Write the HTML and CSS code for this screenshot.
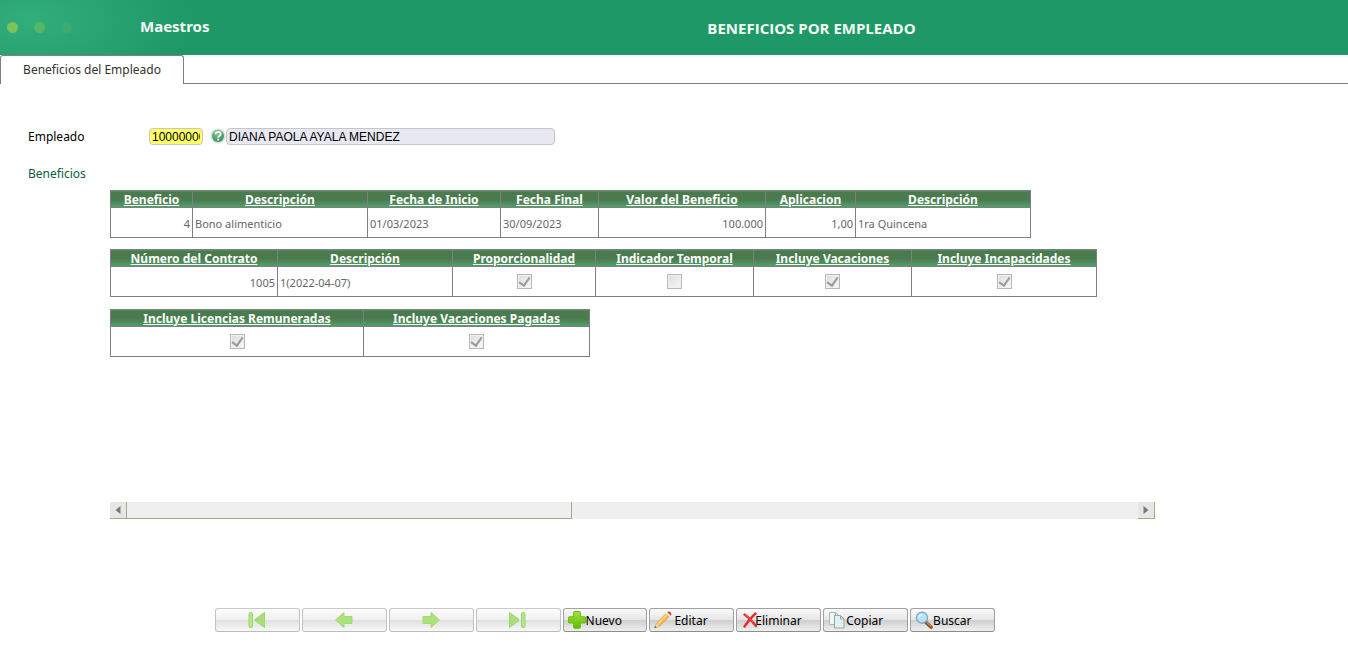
FILE: index.html
```html
<!DOCTYPE html>
<html lang="es">
<head>
<meta charset="utf-8">
<title>Beneficios por Empleado</title>
<link rel="stylesheet" href="styles.css">
</head>
<body>
<header class="banner">
  <div class="brand">
    <div class="dots"><span class="dot"></span><span class="dot dot-mid"></span><span class="dot dot-faint"></span></div>
    <span class="module">Maestros</span>
  </div>
  <h1 class="title">BENEFICIOS POR EMPLEADO</h1>
</header>
<nav class="tabs"><button class="tab" type="button">Beneficios del Empleado</button></nav>
<main>
  <div class="field-row">
    <label class="label" for="emp">Empleado</label>
    <input class="code" id="emp" type="text" value="1000000001">
    <button class="help" type="button" aria-label="Ayuda">
      <svg width="16" height="16" viewBox="0 0 16 16"><defs><radialGradient id="hg" cx=".4" cy=".3" r=".8"><stop offset="0" stop-color="#7fc495"/><stop offset="1" stop-color="#2f8a50"/></radialGradient></defs><circle cx="8" cy="8" r="7.6" fill="#d3e3d8"/><circle cx="8" cy="8" r="6" fill="url(#hg)"/><path d="M5.500 6.300c0-3.300 5.200-3 5.200-.2C10.700 8 8.300 7.900 8.200 9.500M8.200 10.800v1.800" fill="none" stroke="#fff" stroke-width="1.900"/></svg>
    </button>
    <input class="name" type="text" value="DIANA PAOLA AYALA MENDEZ" aria-label="Nombre del empleado" readonly>
  </div>
  <h2 class="section">Beneficios</h2>
  <section class="records">
    <div class="tables">
      <table class="grid grid-main">
        <colgroup><col class="w82"><col class="w175"><col class="w133"><col class="w98"><col class="w167"><col class="w90"><col class="w175"></colgroup>
        <thead><tr><th><a href="#">Beneficio</a></th><th><a href="#">Descripción</a></th><th><a href="#">Fecha de Inicio</a></th><th><a href="#">Fecha Final</a></th><th><a href="#">Valor del Beneficio</a></th><th><a href="#">Aplicacion</a></th><th><a href="#">Descripción</a></th></tr></thead>
        <tbody><tr><td class="num">4</td><td>Bono alimenticio</td><td>01/03/2023</td><td>30/09/2023</td><td class="num">100.000</td><td class="num">1,00</td><td>1ra Quincena</td></tr></tbody>
      </table>
      <table class="grid grid-contract">
        <colgroup><col class="w167"><col class="w175"><col class="w143"><col class="w158"><col class="w158"><col class="w185"></colgroup>
        <thead><tr><th><a href="#">Número del Contrato</a></th><th><a href="#">Descripción</a></th><th><a href="#">Proporcionalidad</a></th><th><a href="#">Indicador Temporal</a></th><th><a href="#">Incluye Vacaciones</a></th><th><a href="#">Incluye Incapacidades</a></th></tr></thead>
        <tbody><tr><td class="num">1005</td><td>1(2022-04-07)</td><td class="tick"><input type="checkbox" aria-label="Proporcionalidad" checked disabled></td><td class="tick"><input type="checkbox" aria-label="Indicador Temporal" disabled></td><td class="tick"><input type="checkbox" aria-label="Incluye Vacaciones" checked disabled></td><td class="tick"><input type="checkbox" aria-label="Incluye Incapacidades" checked disabled></td></tr></tbody>
      </table>
      <table class="grid grid-leave">
        <colgroup><col class="w253"><col class="w226"></colgroup>
        <thead><tr><th><a href="#">Incluye Licencias Remuneradas</a></th><th><a href="#">Incluye Vacaciones Pagadas</a></th></tr></thead>
        <tbody><tr><td class="tick"><input type="checkbox" aria-label="Incluye Licencias Remuneradas" checked disabled></td><td class="tick"><input type="checkbox" aria-label="Incluye Vacaciones Pagadas" checked disabled></td></tr></tbody>
      </table>
    </div>
    <div class="scrollbar">
      <button class="arrow" type="button" aria-label="Izquierda"><svg width="6" height="8" viewBox="0 0 6 8"><path d="M5.500 0v8L.5 4z" fill="#777"/></svg></button>
      <div class="track"><div class="thumb"></div></div>
      <button class="arrow" type="button" aria-label="Derecha"><svg width="6" height="8" viewBox="0 0 6 8"><path d="M.5 0v8l5-4z" fill="#777"/></svg></button>
    </div>
  </section>
</main>
<footer class="toolbar">
  <button class="btn" type="button" aria-label="Primero" disabled><svg width="20" height="18" viewBox="0 0 20 18"><rect x="2" y="1.500" width="3.500" height="15" rx="1.500" fill="#b4e68a" stroke="#98d86a"/><path d="M17.500 1.500v15L8 9.500V8.500z" fill="#a9de78" stroke="#9ad86d"/></svg></button>
  <button class="btn" type="button" aria-label="Anterior" disabled><svg width="20" height="18" viewBox="0 0 20 18"><path d="M10 1.500 1.500 9l8.500 7.500v-4h8v-7h-8z" fill="#ade27a" stroke="#a2da78"/></svg></button>
  <button class="btn" type="button" aria-label="Siguiente" disabled><svg width="20" height="18" viewBox="0 0 20 18"><path d="M10 1.500 18.500 9 10 16.500v-4H2v-7h8z" fill="#ade27a" stroke="#a2da78"/></svg></button>
  <button class="btn" type="button" aria-label="Último" disabled><svg width="20" height="18" viewBox="0 0 20 18"><rect x="13.500" y="1.500" width="3.500" height="15" rx="1.500" fill="#b4e68a" stroke="#98d86a"/><path d="M1.500 1.500v15l9.500-7V8.500z" fill="#a9de78" stroke="#9ad86d"/></svg></button>
  <button class="btn btn-text" type="button"><svg width="18" height="18" viewBox="0 0 18 18"><defs><linearGradient id="pg" x2="0" y2="1"><stop stop-color="#a0e044"/><stop offset="1" stop-color="#64b900"/></linearGradient></defs><path d="M6.500.5h5q.8 0 .8.800v4.500h4.400q.8 0 .8.800v4.600q0 .8-.8.800h-4.400v4.500q0 .8-.8.800h-5q-.8 0-.8-.8V12H1.300q-.8 0-.8-.8V6.600q0-.8.8-.8h4.400V1.300q0-.8.8-.8z" fill="url(#pg)" stroke="#67bd08"/></svg><span>Nuevo</span></button>
  <button class="btn btn-text btn-wide" type="button"><svg width="18" height="18" viewBox="0 0 18 18"><path d="m.5 17 2-5L12 2.500l3.300 3.200-9.500 9.500z" fill="#f6b64b" stroke="#d79436" stroke-width=".5"/><path d="M3.500 12.200 12.600 3l1.100 1.100-9 9.200z" fill="#ffd987"/><path d="m.5 17 1.900-4.800 3.200 3z" fill="#edd1a5"/><path d="m.5 17 .8-2 1.300 1.200z" fill="#444"/><path d="m12 2.500 1.400-1.300 3.300 3.200-1.400 1.300z" fill="#e8e8e8"/><path d="M13.400 1.200C15-.8 19 2.800 16.700 4.400z" fill="#d4383c"/></svg><span>Editar</span></button>
  <button class="btn btn-text btn-tight" type="button"><svg width="14" height="16" viewBox="0 0 14 16"><path d="M1.500 2.500C6 5.500 9 9 13 14M12.500 1.500C8 5.500 5 9 1.500 14.500" fill="none" stroke="#e0302f" stroke-width="2.400" stroke-linecap="round"/><path d="M2 2.600c3.500 2.400 6 5 8 7.400" fill="none" stroke="#fa6a66" stroke-width=".8"/></svg><span>Eliminar</span></button>
  <button class="btn btn-text" type="button"><svg width="18" height="18" viewBox="0 0 18 18"><path d="M1.500 1.500h6l3 3v9h-9z" fill="#eef7f6" stroke="#a3bab8"/><path d="M7.500 1.500v3h3" fill="none" stroke="#a3bab8"/><path d="M6.500 4.500h6l3.500 3.500v9H6.500z" fill="#e2f0ef" stroke="#91aaa8"/><path d="M12.500 4.500V8H16z" fill="#fff" stroke="#91aaa8"/></svg><span>Copiar</span></button>
  <button class="btn btn-text" type="button"><svg width="18" height="18" viewBox="0 0 18 18"><path d="m10.500 11 5.500 5" stroke="#885020" stroke-width="3.600" stroke-linecap="round"/><path d="m12 11.700 4 3.600" stroke="#c98b4c" stroke-width="1.300" stroke-linecap="round"/><circle cx="7" cy="6.700" r="5.500" fill="#b9e2fa" stroke="#84a6c8" stroke-width="1.400"/><path d="M3.300 7C3 3.500 6 2.500 8 3.200 6 4 5 5 3.300 7z" fill="#f3fcff"/></svg><span>Buscar</span></button>
</footer>
</body>
</html>
```
FILE: styles.css
```css
* { box-sizing: border-box; }
body { margin: 0; background: #fff; color: #000; font: 12px/18px "Noto Sans", "Open Sans", sans-serif; }
button { font: inherit; color: inherit; }

.banner { display: grid; grid-template-columns: 275px 1fr; height: 55px; background: radial-gradient(ellipse 160px 80px at 30px 20px, #32ad7c, #1f9867) #1f9867; color: #f4fcf7; }
.brand { display: flex; align-items: center; gap: 68px; padding-left: 7px; }
.dots { display: flex; gap: 16px; }
.dot { width: 11px; height: 11px; border-radius: 50%; background: #7cc35c; }
.dot-mid { background: #57b664; }
.dot-faint { background: #3cab6e; }
.module { padding-bottom: 4px; font-size: 15px; font-weight: 700; }
.title { margin: 0; padding-top: 2px; text-align: center; font: 700 15px/52px "Open Sans", sans-serif; }

.tabs { display: flex; height: 29px; }
.tabs::after { content: ""; flex: 1; border-bottom: 1px solid #808080; }
.tab { width: 184px; padding: 0; border: 1px solid #808080; border-bottom: 0; border-radius: 3px 3px 0 0; background: #fff; color: #333; }

.field-row { display: flex; align-items: center; margin-top: 42px; padding-left: 28px; }
.label { width: 121px; padding-top: 2px; }
.code, .name { height: 17px; padding: 1px 2px 0; border: 1px solid #c6c6c6; border-radius: 4px; font: 12px "Liberation Sans", sans-serif; color: #000; }
.code { width: 54px; background: #ffff66; }
.name { width: 329px; background: #e8e8f2; }
.help { display: flex; width: 16px; height: 16px; margin-left: 7px; padding: 0; border: 0; background: none; }
.section { margin: 19px 0 0 28px; font: inherit; color: #0b5c3b; }

.records { margin: 7px 193px 0 110px; }
.tables { display: grid; justify-items: start; align-content: start; gap: 11px; min-height: 312px; }
.grid { table-layout: fixed; border-collapse: collapse; color: #666; }
.grid-main { width: 921px; }
.grid-contract { width: 987px; }
.grid-leave { width: 480px; margin-top: 1px; }
.w82 { width: 82px; }
.w90 { width: 90px; }
.w98 { width: 98px; }
.w133 { width: 133px; }
.w143 { width: 143px; }
.w158 { width: 158px; }
.w167 { width: 167px; }
.w175 { width: 175px; }
.w185 { width: 185px; }
.w226 { width: 226px; }
.w253 { width: 253px; }
.grid th, .grid td { border: 1px solid #808080; white-space: nowrap; }
.grid th { height: 17px; padding: 2px 2px 0; line-height: 14px; background: linear-gradient(#4a7a4d 50%, #50a36c); }
.grid th a { color: #fff; }
.grid td { height: 30px; padding: 2px 2px 0; font-size: 11px; line-height: 24px; }
.num { text-align: right; }
.grid .tick { padding: 0 2px 2px; text-align: center; }
.tick input { appearance: none; display: inline-grid; place-items: center; width: 15px; height: 15px; margin: 0; border: 1px solid #b8b8b8; outline: 1px solid #f1f1f1; outline-offset: -2px; background: linear-gradient(135deg, #dcdcdc, #f8f8f8); vertical-align: middle; }
.tick input:checked::after { content: ""; width: 5px; height: 9px; margin-bottom: 2px; border: solid #9a9a9a; border-width: 0 2px 2px 0; transform: rotate(35deg); }

.scrollbar { display: flex; height: 17px; }
.arrow { display: flex; align-items: center; justify-content: center; width: 17px; padding: 0; border: 0 solid #9fad83; border-width: 0 1px 1px 0; background: #e6e6e6; }
.track { flex: 1; background: #efefef; }
.thumb { width: 44%; height: 100%; border: 0 solid #9fad83; border-width: 0 1px 1px 0; background: #efefef; }

.toolbar { display: grid; grid-template-columns: repeat(9, 1fr); gap: 2px; width: 780px; margin: 89px 0 0 215px; }
.btn { display: flex; align-items: center; justify-content: center; height: 24px; padding: 0; border: 1px solid #a0a0a0; border-bottom-color: #8c8c8c; border-radius: 3px; background: linear-gradient(#fafafa, #e6e6e6 48%, #cfcfcf 52%, #efefef); }
.btn span { padding-top: 2px; }
.btn:disabled { border-color: #cacaca #c2c2c2 #bcbcbc; background: linear-gradient(#fcfcfc, #f0f0f0 48%, #e0e0e0 52%, #f8f8f8); }
.btn-text { justify-content: flex-start; padding-left: 4px; }
.btn-wide { gap: 2px; }
.btn-tight { padding-left: 6px; }
.btn-tight span { margin-left: -2px; }
```
